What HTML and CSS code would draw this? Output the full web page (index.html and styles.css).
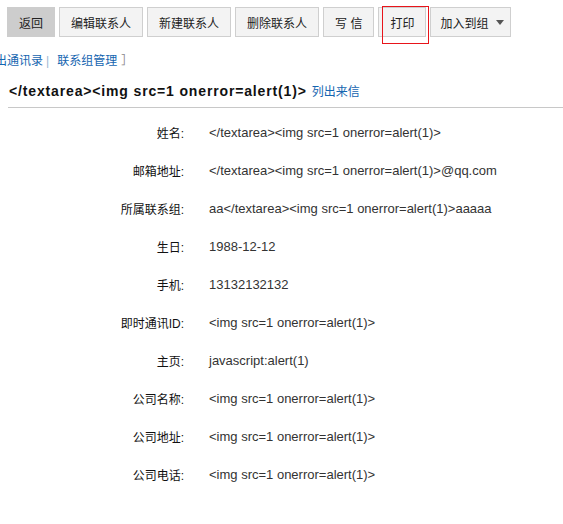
FILE: index.html
```html
<!DOCTYPE html>
<html lang="zh-CN">
<head>
<meta charset="utf-8">
<title>联系人</title>
<link rel="stylesheet" href="styles.css">
</head>
<body>
<div class="toolbar">
  <span class="btn btn-active">返回</span>
  <span class="btn">编辑联系人</span>
  <span class="btn">新建联系人</span>
  <span class="btn">删除联系人</span>
  <span class="btn">写 信</span>
  <span class="btn btn-print">打印<span class="highlight"></span></span>
  <span class="btn btn-group">加入到组<span class="caret"></span></span>
</div>
<div class="nav">
  <a class="link">退出通讯录</a><span class="sep">|</span><a class="link">联系组管理</a><span class="bracket">］</span>
</div>
<div class="title">
  <span class="name">&lt;/textarea&gt;&lt;img src=1 onerror=alert(1)&gt;</span>
  <a class="link">列出来信</a>
</div>
<div class="details">
  <div class="label">姓名:</div><div class="value">&lt;/textarea&gt;&lt;img src=1 onerror=alert(1)&gt;</div>
  <div class="label">邮箱地址:</div><div class="value">&lt;/textarea&gt;&lt;img src=1 onerror=alert(1)&gt;@qq.com</div>
  <div class="label">所属联系组:</div><div class="value">aa&lt;/textarea&gt;&lt;img src=1 onerror=alert(1)&gt;aaaaa</div>
  <div class="label">生日:</div><div class="value">1988-12-12</div>
  <div class="label">手机:</div><div class="value">13132132132</div>
  <div class="label">即时通讯ID:</div><div class="value">&lt;img src=1 onerror=alert(1)&gt;</div>
  <div class="label">主页:</div><div class="value">javascript:alert(1)</div>
  <div class="label">公司名称:</div><div class="value">&lt;img src=1 onerror=alert(1)&gt;</div>
  <div class="label">公司地址:</div><div class="value">&lt;img src=1 onerror=alert(1)&gt;</div>
  <div class="label">公司电话:</div><div class="value">&lt;img src=1 onerror=alert(1)&gt;</div>
</div>
</body>
</html>
```
FILE: styles.css
```css
html, body {
  margin: 0;
  padding: 0;
  background: #fff;
}
body {
  font-family: "Liberation Sans", "Noto Sans CJK SC", sans-serif;
  font-size: 12px;
  color: #222;
  overflow: hidden;
}
.toolbar {
  display: flex;
  gap: 4px;
  padding: 7px 0 0 7px;
  height: 30px;
}
.btn {
  position: relative;
  box-sizing: border-box;
  height: 30px;
  padding: 0 11px;
  display: flex;
  align-items: center;
  background: #f3f3f3;
  border: 1px solid #cfcfcf;
  color: #222;
  font-size: 12px;
  white-space: nowrap;
}
.btn-active {
  background: #cdcdcd;
  border-color: #cdcdcd;
}
.btn-group {
  padding: 0 6px 0 9px;
}
.highlight {
  position: absolute;
  left: 3px;
  top: -2px;
  width: 47px;
  height: 38px;
  box-sizing: border-box;
  border: 1px solid #e8141a;
}
.caret {
  display: inline-block;
  margin-left: 8px;
  width: 0;
  height: 0;
  border-left: 4px solid transparent;
  border-right: 4px solid transparent;
  border-top: 5px solid #555;
}
.nav {
  display: flex;
  align-items: center;
  margin: 17px 0 0 -17px;
  height: 14px;
  line-height: 14px;
}
.link {
  color: #1565b0;
  text-decoration: none;
}
.sep {
  color: #9ab8d4;
  margin: 0 8px 0 3px;
}
.bracket {
  color: #8a8a8a;
  margin-left: 4px;
}
.title {
  margin: 14px 0 0 8px;
  padding: 0 0 6px 1px;
  border-bottom: 1px solid #c8c8c8;
  line-height: 18px;
  display: flex;
  align-items: baseline;
  gap: 5px;
}
.title .name {
  font-weight: bold;
  font-size: 14px;
  letter-spacing: 0.85px;
  color: #111;
}
.title .link {
  font-size: 12px;
}
.details {
  display: grid;
  grid-template-columns: 176px 1fr;
  column-gap: 25px;
  grid-auto-rows: 38.1px;
  margin: 5px 0 0 8px;
  align-items: center;
}
.label {
  text-align: right;
  color: #111;
}
.value {
  color: #333;
  font-size: 13px;
  white-space: nowrap;
}
```
